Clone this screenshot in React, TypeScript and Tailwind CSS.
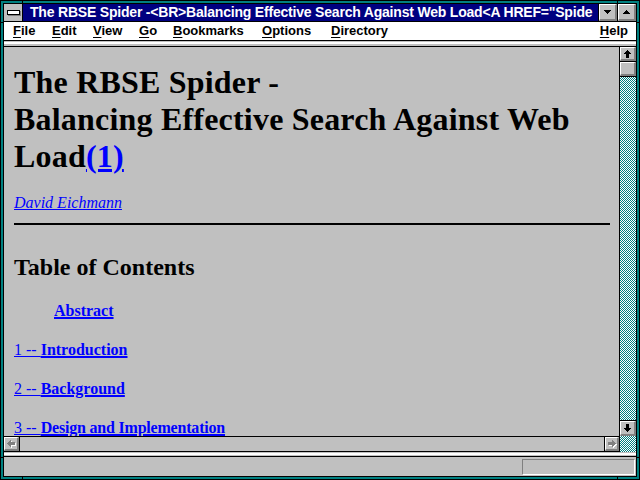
import React from "react";

function Face({ className = "", children }: { className?: string; children?: React.ReactNode }) {
  return (
    <div
      className={
        "flex items-center justify-center bg-[#c0c0c0] border-t border-l border-t-white border-l-white border-b-2 border-r-2 border-b-[#808080] border-r-[#808080] " +
        className
      }
    >
      {children}
    </div>
  );
}

function Dither({ className = "" }: { className?: string }) {
  return (
    <div className={"overflow-hidden " + className}>
      <svg className="block" width="100%" height="100%" shapeRendering="crispEdges">
        <defs>
          <pattern id="dz" width="2" height="2" patternUnits="userSpaceOnUse">
            <rect width="2" height="2" fill="#008080" />
            <rect width="1" height="1" fill="#ffffff" />
            <rect x="1" y="1" width="1" height="1" fill="#ffffff" />
          </pattern>
        </defs>
        <rect width="100%" height="100%" fill="url(#dz)" />
      </svg>
    </div>
  );
}

function TriDown() {
  return (
    <svg width="7" height="4" viewBox="0 0 7 4" shapeRendering="crispEdges">
      <polygon points="0,0 7,0 3.5,4" fill="#000" />
    </svg>
  );
}
function TriUp() {
  return (
    <svg width="7" height="4" viewBox="0 0 7 4" shapeRendering="crispEdges">
      <polygon points="3.5,0 7,4 0,4" fill="#000" />
    </svg>
  );
}
function ArrowUp() {
  return (
    <svg width="7" height="8" viewBox="0 0 7 8" shapeRendering="crispEdges">
      <polygon points="3.5,0 7,4 5,4 5,8 2,8 2,4 0,4" fill="#000" />
    </svg>
  );
}
function ArrowDown() {
  return (
    <svg width="7" height="8" viewBox="0 0 7 8" shapeRendering="crispEdges">
      <polygon points="2,0 5,0 5,4 7,4 3.5,8 0,4 2,4" fill="#000" />
    </svg>
  );
}
function ArrowLeftDis() {
  return (
    <svg width="10" height="9" viewBox="0 0 10 9" shapeRendering="crispEdges">
      <polygon points="1,4.5 5,1 5,3 9,3 9,6 5,6 5,8" fill="#ffffff" transform="translate(1,1)" />
      <polygon points="1,4.5 5,1 5,3 9,3 9,6 5,6 5,8" fill="#808080" />
    </svg>
  );
}
function ArrowRightDis() {
  return (
    <svg width="10" height="9" viewBox="0 0 10 9" shapeRendering="crispEdges">
      <polygon points="9,4.5 5,1 5,3 1,3 1,6 5,6 5,8" fill="#ffffff" transform="translate(1,1)" />
      <polygon points="9,4.5 5,1 5,3 1,3 1,6 5,6 5,8" fill="#808080" />
    </svg>
  );
}

function Mn({ k, rest, w }: { k: string; rest: string; w: string }) {
  return (
    <span className={w + " shrink-0"}>
      <u className="underline underline-offset-[2px]">{k}</u>
      {rest}
    </span>
  );
}

export default function App() {
  return (
    <div className="relative w-[640px] h-[480px] overflow-hidden font-['Liberation_Sans',Arial,sans-serif]">
      <div className="w-full h-full border border-black bg-[#008080] p-[2px]">
        <div className="w-full h-full border border-black flex flex-col overflow-hidden bg-[#c0c0c0]">
          {/* Title bar */}
          <div className="flex h-[18px] shrink-0 border-b border-black">
            <div className="w-[19px] h-full bg-[#c0c0c0] border-r border-black flex items-center justify-center">
              <div className="w-[13px] h-[5px] bg-white border border-black shadow-[1px_1px_0_#808080]" />
            </div>
            <div className="flex-1 bg-[#000080] text-white font-bold text-[14px] tracking-[-0.2px] leading-[17px] pl-[7px] overflow-hidden whitespace-nowrap">
              The RBSE Spider -&lt;BR&gt;Balancing Effective Search Against Web Load&lt;A HREF="Spide
            </div>
            <div className="w-[19px] h-full border-l border-black flex">
              <Face className="w-full h-full">
                <TriDown />
              </Face>
            </div>
            <div className="w-[19px] h-full border-l border-black flex">
              <Face className="w-full h-full">
                <TriUp />
              </Face>
            </div>
          </div>

          {/* Menu bar */}
          <div className="flex h-[19px] shrink-0 border-b border-black bg-white text-black text-[13px] font-bold leading-[18px] pl-[9px] pr-[8px] whitespace-nowrap">
            <Mn k="F" rest="ile" w="w-[39px]" />
            <Mn k="E" rest="dit" w="w-[41px]" />
            <Mn k="V" rest="iew" w="w-[46px]" />
            <Mn k="G" rest="o" w="w-[34px]" />
            <Mn k="B" rest="ookmarks" w="w-[89px]" />
            <Mn k="O" rest="ptions" w="w-[69px]" />
            <Mn k="D" rest="irectory" w="w-[60px]" />
            <span className="ml-auto">
              <u className="underline underline-offset-[2px]">H</u>elp
            </span>
          </div>

          {/* Toolbar strip */}
          <div className="h-[6px] shrink-0 border-b border-black bg-[#c0c0c0] pt-px">
            <div className="h-[2px] bg-white" />
          </div>

          {/* Main area */}
          <div className="flex h-[389px] shrink-0">
            <div className="w-[616px] h-full border-r border-black overflow-hidden bg-[#c0c0c0] pt-[17px] pl-[10px] pr-[9px] font-['Liberation_Serif','Times_New_Roman',serif] text-black">
              <h1 className="text-[32px] leading-[37px] font-bold tracking-[0.2px]">
                The RBSE Spider -<br />
                Balancing Effective Search Against Web Load
                <a className="text-[#0000ff] underline decoration-[3px] underline-offset-[2px]">(1)</a>
              </h1>
              <p className="mt-[18px] text-[16px] leading-[19px] italic">
                <a className="text-[#0000ff] underline">David Eichmann</a>
              </p>
              <div className="mt-[11px] h-[2px] bg-black" />
              <h2 className="mt-[28px] text-[24px] leading-[28px] font-bold">Table of Contents</h2>
              <p className="mt-[20px] pl-[40px] text-[16px] leading-[19px] font-bold">
                <a className="text-[#0000ff] underline decoration-2">Abstract</a>
              </p>
              <p className="mt-[20px] text-[16px] leading-[19px] whitespace-nowrap">
                <a className="text-[#0000ff]">
                  <span className="underline">1 -- </span>
                  <span className="font-bold underline decoration-2">Introduction</span>
                </a>
              </p>
              <p className="mt-[20px] text-[16px] leading-[19px] whitespace-nowrap">
                <a className="text-[#0000ff]">
                  <span className="underline">2 -- </span>
                  <span className="font-bold underline decoration-2">Background</span>
                </a>
              </p>
              <p className="mt-[20px] text-[16px] leading-[19px] whitespace-nowrap">
                <a className="text-[#0000ff]">
                  <span className="underline">3 -- </span>
                  <span className="font-bold underline decoration-2 tracking-[-0.2px]">Design and Implementation</span>
                </a>
              </p>
            </div>
            {/* Vertical scrollbar */}
            <div className="w-[16px] h-full flex flex-col">
              <div className="h-[15px] shrink-0 border-b border-black flex">
                <Face className="w-full h-full">
                  <ArrowUp />
                </Face>
              </div>
              <div className="h-[15px] shrink-0 border-b border-black flex">
                <Face className="w-full h-full" />
              </div>
              <Dither className="flex-1" />
              <div className="h-[16px] shrink-0 border-t border-black flex">
                <Face className="w-full h-full">
                  <ArrowDown />
                </Face>
              </div>
            </div>
          </div>

          {/* Horizontal scrollbar */}
          <div className="flex h-[16px] shrink-0">
            <div className="w-[616px] h-full flex border-y border-r border-black bg-[#c0c0c0]">
              <div className="w-[16px] h-full border-r border-black flex">
                <Face className="w-full h-full">
                  <ArrowLeftDis />
                </Face>
              </div>
              <div className="flex-1" />
              <div className="w-[15px] h-full border-l border-black flex">
                <Face className="w-full h-full">
                  <ArrowRightDis />
                </Face>
              </div>
            </div>
            <Dither className="w-[16px] h-full" />
          </div>

          {/* Status strip */}
          <div className="h-[5px] shrink-0 bg-[#c0c0c0] border-b border-black pt-px">
            <div className="h-[2px] bg-white" />
          </div>

          {/* Status bar */}
          <div className="h-[19px] shrink-0 flex justify-end pr-px pt-[2px] bg-[#c0c0c0]">
            <div className="w-[113px] h-[16px] border border-t-[#808080] border-l-[#808080] border-b-white border-r-white" />
          </div>
        </div>
      </div>

      {/* frame notches */}
      <div className="absolute left-[22px] top-0 w-px h-[4px] bg-black" />
      <div className="absolute left-[617px] top-0 w-px h-[4px] bg-black" />
      <div className="absolute left-[22px] bottom-0 w-px h-[4px] bg-black" />
      <div className="absolute left-[617px] bottom-0 w-px h-[4px] bg-black" />
      <div className="absolute left-0 top-[22px] w-[4px] h-px bg-black" />
      <div className="absolute right-0 top-[22px] w-[4px] h-px bg-black" />
      <div className="absolute left-0 top-[457px] w-[4px] h-px bg-black" />
      <div className="absolute right-0 top-[457px] w-[4px] h-px bg-black" />
    </div>
  );
}
